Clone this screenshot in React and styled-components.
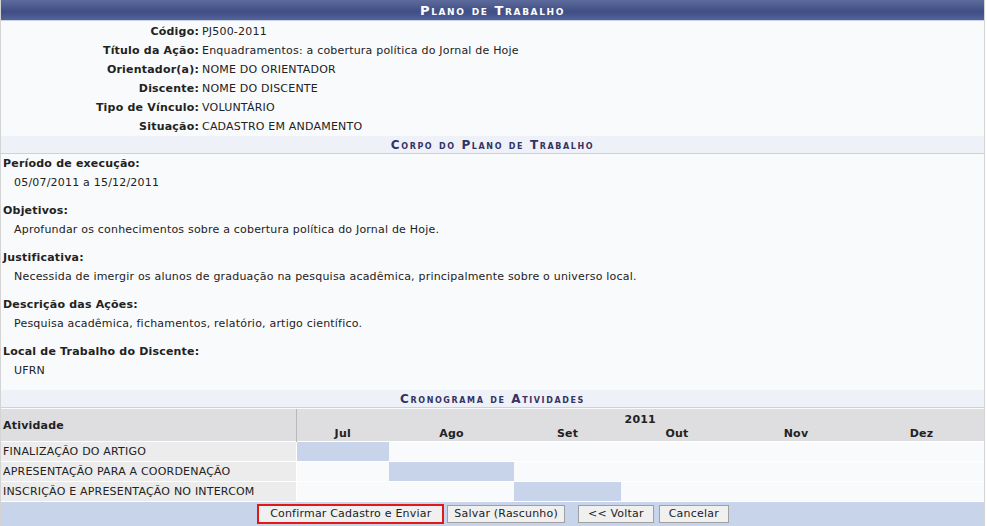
import React from "react";
import styled, { createGlobalStyle } from "styled-components";

const Global = createGlobalStyle`
  html, body { margin: 0; padding: 0; background: #ffffff; }
  body { font-family: Verdana, "DejaVu Sans", sans-serif; font-size: 11px; letter-spacing: 0.2px; color: #222; }
`;

const Form = styled.div`
  width: 983px;
  border-left: 1px solid #d4d4d4;
  border-right: 1px solid #d4d4d4;
  background: #f9fafc;
`;

const Caption = styled.div`
  height: 20px;
  line-height: 21px;
  text-align: center;
  color: #ffffff;
  font-weight: bold;
  font-size: 13px;
  font-variant: small-caps;
  letter-spacing: 1.6px;
  background: linear-gradient(#5d6b9b 0%, #46548a 45%, #3f4e84 60%, #53629a 100%);
  border-bottom: 1px solid #c9d3e4;
`;

const InfoGrid = styled.div`
  display: grid;
  grid-template-columns: 198px 1fr;
  column-gap: 3px;
  grid-auto-rows: 19px;
  align-items: center;
  padding-top: 1px;
`;

const Label = styled.div`
  text-align: right;
  font-weight: bold;
  color: #222;
`;

const Value = styled.div`
  color: #222;
`;

const SubCaption = styled.div`
  height: 17px;
  line-height: 18px;
  text-align: center;
  background: #eef1f7;
  border-bottom: 1px solid #c5d3ea;
  color: #333366;
  font-weight: bold;
  font-size: 12px;
  font-variant: small-caps;
  letter-spacing: 1.6px;
`;

const Body = styled.div`
  padding-bottom: 1px;
`;

const Block = styled.div`
  padding-bottom: 9px;
`;

const Term = styled.div`
  height: 19px;
  line-height: 19px;
  padding-left: 2px;
  font-weight: bold;
`;

const Desc = styled.div`
  height: 19px;
  line-height: 19px;
  padding-left: 13px;
`;

const Table = styled.table`
  width: 100%;
  border-collapse: collapse;
  table-layout: fixed;
  margin-top: 1px;
`;

const HeadCell = styled.th`
  background: #dedee0;
  font-weight: bold;
  text-align: ${(p) => (p.$left ? "left" : "center")};
  padding: 0 0 0 ${(p) => (p.$left ? "2px" : "0")};
  height: ${(p) => p.$h || "auto"};
  line-height: 13px;
  border-right: ${(p) => (p.$sep ? "1px solid #b8b8b8" : "none")};
  vertical-align: ${(p) => (p.$bottom ? "bottom" : "middle")};
`;

const Row = styled.tr`
  border-top: 1px solid #ffffff;
`;

const ActCell = styled.td`
  background: #ececec;
  height: 19px;
  padding: 0 0 0 2px;
  color: #222;
  white-space: nowrap;
  border-right: 1px solid #ffffff;
`;

const MonthCell = styled.td`
  background: ${(p) => (p.$on ? "#c8d4ea" : "#f9fafc")};
  padding: 0;
`;

const Footer = styled.div`
  height: 24px;
  background: #c8d4ea;
  display: flex;
  justify-content: center;
  align-items: center;
  border-top: 1px solid #ffffff;
  padding-left: 2px;
`;

const Button = styled.button`
  font-family: Verdana, "DejaVu Sans", sans-serif;
  font-size: 11px;
  letter-spacing: 0.2px;
  color: #222;
  height: 18px;
  padding: 0 ${(p) => p.$pad || "9px"};
  margin-left: ${(p) => p.$gap || "0"};
  background: #f0f0f0;
  border: 1px solid ${(p) => (p.$focus ? "#e01818" : "#a0a0a0")};
  outline: ${(p) => (p.$focus ? "1px solid #e01818" : "none")};
  border-radius: 0;
  line-height: 14px;
`;

const info = [
  ["Código:", "PJ500-2011"],
  ["Título da Ação:", "Enquadramentos: a cobertura política do Jornal de Hoje"],
  ["Orientador(a):", "NOME DO ORIENTADOR"],
  ["Discente:", "NOME DO DISCENTE"],
  ["Tipo de Vínculo:", "VOLUNTÁRIO"],
  ["Situação:", "CADASTRO EM ANDAMENTO"],
];

const body = [
  ["Período de execução:", "05/07/2011 a 15/12/2011"],
  ["Objetivos:", "Aprofundar os conhecimentos sobre a cobertura política do Jornal de Hoje."],
  ["Justificativa:", "Necessida de imergir os alunos de graduação na pesquisa acadêmica, principalmente sobre o universo local."],
  ["Descrição das Ações:", "Pesquisa acadêmica, fichamentos, relatório, artigo científico."],
  ["Local de Trabalho do Discente:", "UFRN"],
];

const months = ["Jul", "Ago", "Set", "Out", "Nov", "Dez"];
const widths = [295, 93, 125, 107, 112, 126, 125];

const activities = [
  ["FINALIZAÇÃO DO ARTIGO", [0]],
  ["APRESENTAÇÃO PARA A COORDENAÇÃO", [1]],
  ["INSCRIÇÃO E APRESENTAÇÃO NO INTERCOM", [2]],
];

export default function App() {
  return (
    <>
      <Global />
      <Form>
        <Caption>Plano de Trabalho</Caption>
        <InfoGrid>
          {info.map(([l, v]) => (
            <React.Fragment key={l}>
              <Label>{l}</Label>
              <Value>{v}</Value>
            </React.Fragment>
          ))}
        </InfoGrid>
        <SubCaption>Corpo do Plano de Trabalho</SubCaption>
        <Body>
          {body.map(([t, d]) => (
            <Block key={t}>
              <Term>{t}</Term>
              <Desc>{d}</Desc>
            </Block>
          ))}
        </Body>
        <SubCaption>Cronograma de Atividades</SubCaption>
        <Table>
          <colgroup>
            {widths.map((w, i) => (
              <col key={i} style={{ width: w }} />
            ))}
          </colgroup>
          <thead>
            <tr>
              <HeadCell $left $sep rowSpan={2}>Atividade</HeadCell>
              <HeadCell colSpan={6} $bottom $h="17px">2011</HeadCell>
            </tr>
            <tr>
              {months.map((m) => (
                <HeadCell key={m} $h="15px">{m}</HeadCell>
              ))}
            </tr>
          </thead>
          <tbody>
            {activities.map(([a, on]) => (
              <Row key={a}>
                <ActCell>{a}</ActCell>
                {months.map((m, i) => (
                  <MonthCell key={m} $on={on.includes(i)} />
                ))}
              </Row>
            ))}
          </tbody>
        </Table>
        <Footer>
          <Button $focus $pad="11px">Confirmar Cadastro e Enviar</Button>
          <Button $gap="4px" $pad="6px">Salvar (Rascunho)</Button>
          <Button $gap="13px">&lt;&lt; Voltar</Button>
          <Button $gap="5px">Cancelar</Button>
        </Footer>
      </Form>
    </>
  );
}
